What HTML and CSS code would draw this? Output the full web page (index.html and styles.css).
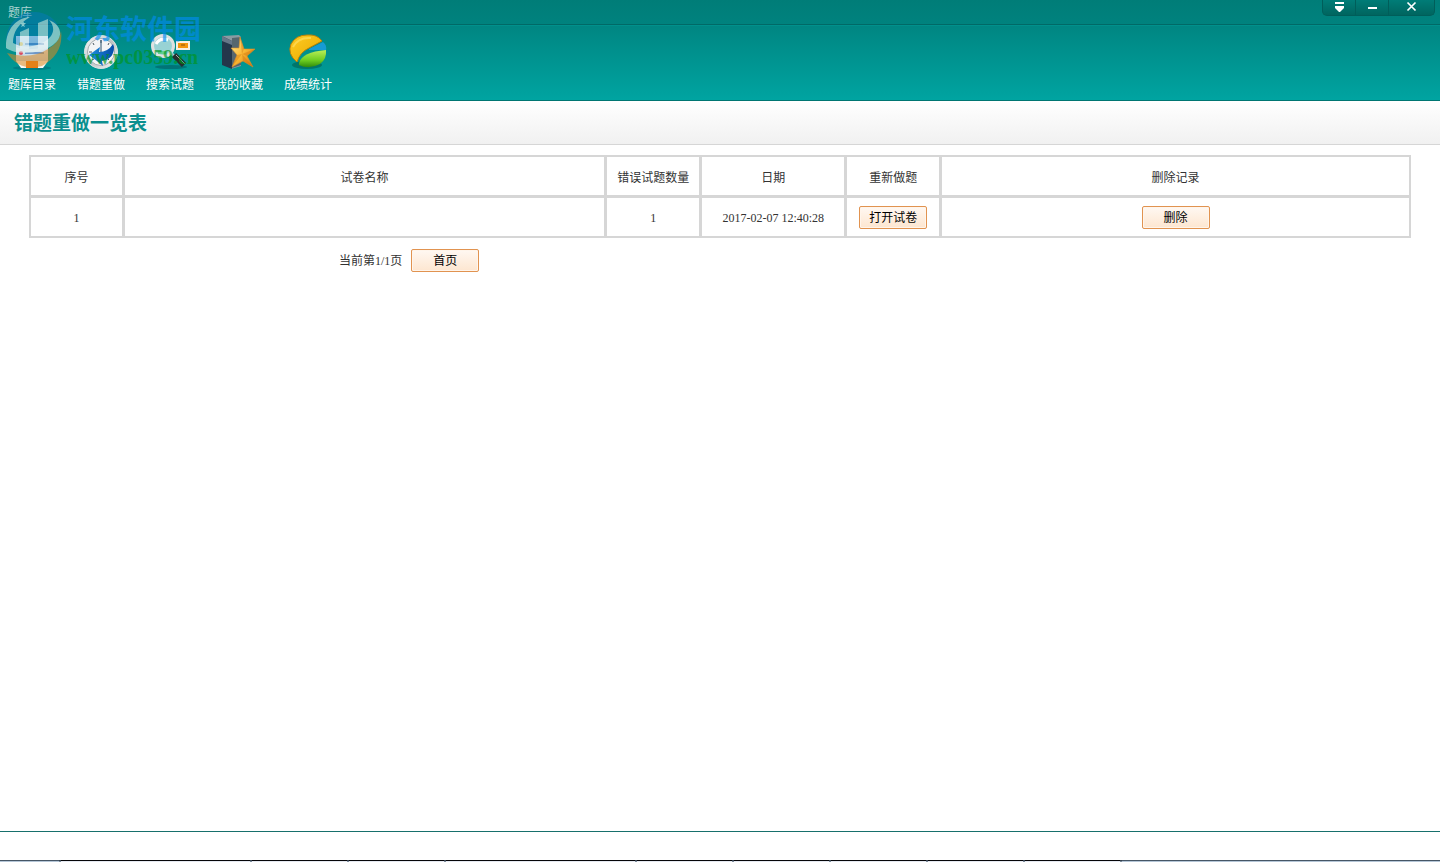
FILE: index.html
```html
<!DOCTYPE html>
<html lang="zh-CN">
<head>
<meta charset="utf-8">
<title>题库</title>
<link rel="stylesheet" href="styles.css">
</head>
<body>
<div class="app">
  <header class="titlebar">
    <span class="app-name">题库</span>
    <div class="window-controls">
      <button type="button" aria-label="菜单"><svg width="11" height="12" viewBox="0 0 11 12"><path d="M1 2h9v2H1zM1 6h9v2L6 12H5L1 8z" fill="#fff"/></svg></button>
      <button type="button" aria-label="最小化"><svg width="11" height="12" viewBox="0 0 11 12"><path d="M1 7h9v2H1z" fill="#fff"/></svg></button>
      <button type="button" class="close" aria-label="关闭"><svg width="11" height="12" viewBox="0 0 11 12"><path d="M1.500 2.500l8 8M9.500 2.500l-8 8" stroke="#fff" stroke-width="1.700"/></svg></button>
    </div>
  </header>

  <nav class="toolbar">
    <a class="tool" href="#">
      <svg width="40" height="40" viewBox="0 0 40 40"><defs><linearGradient id="pg" x2="0" y2="1"><stop stop-color="#f5faff"/><stop offset="1" stop-color="#bcd2e4"/></linearGradient></defs><ellipse cx="20" cy="36" rx="19" ry="2" fill="#035" opacity=".25"/><path d="M4 29h32l-5 7H9z" fill="#f8f8f5"/><path d="M14 28h12v8H14z" fill="#f07810"/><path d="M4 4h32v25H4z" fill="url(#pg)"/><path d="M13 11h19v2H13zM13 20h19v2H13z" fill="#6f98c9"/><circle cx="9" cy="12" r="2" fill="#f9c62e"/><circle cx="9" cy="21" r="2" fill="#d94c60"/></svg>
      <span>题库目录</span>
    </a>
    <a class="tool" href="#">
      <svg width="40" height="40" viewBox="0 0 40 40"><defs><linearGradient id="clock" x2="1" y2="1"><stop stop-color="#fff"/><stop offset=".5" stop-color="#bcc2c3"/><stop offset="1" stop-color="#fafafa"/></linearGradient><linearGradient id="arrow" x2="1"><stop stop-color="#1d8fdd"/><stop offset="1" stop-color="#064caa"/></linearGradient></defs><circle cx="20" cy="20" r="16.500" fill="url(#clock)" stroke="#d9e2e2"/><circle cx="20" cy="20" r="13.500" fill="#f3f5f6" stroke="#a5adb0"/><path d="M20 8v3M20 29v3M8 20h3M29 20h3M12 11l1 2M28 11l-1 2M11 28l2-1M28 28l-1-1" stroke="#4b5960"/><path d="M20 8v14" stroke="#28516c"/><path d="M8 23L19 15l-1 5q9 0 14-8l1 3q0 12-12 14l1 5Q15 28 8 23z" fill="url(#arrow)"/></svg>
      <span>错题重做</span>
    </a>
    <a class="tool" href="#">
      <svg width="40" height="40" viewBox="0 0 40 40"><ellipse cx="21" cy="35" rx="16" ry="2" fill="#034" opacity=".35"/><path d="M26 9h14v9H26z" fill="#f9eee1"/><path d="M28 11h10v5H28z" fill="#f4940e"/><path d="M31 13h4" stroke="#89540c"/><path d="M20 20l5 5" stroke="#bdc6c7" stroke-width="3"/><path d="M24 23l10 10" stroke="#25302f" stroke-width="6"/><path d="M26 23l9 9" stroke="#a5aeaa" stroke-width="1"/><circle cx="13" cy="14" r="10.500" fill="#d9f0f4" fill-opacity=".7" stroke="#dfe1e1" stroke-width="3"/><path d="M6 12q4-7 12-4" fill="none" stroke="#fff" stroke-width="3"/><path d="M8 19h8v3H8z" fill="#5ecf91"/></svg>
      <span>搜索试题</span>
    </a>
    <a class="tool" href="#">
      <svg width="40" height="40" viewBox="0 0 40 40"><defs><linearGradient id="star" x2="1" y2="1"><stop stop-color="#fff0a0"/><stop offset=".5" stop-color="#fbb935"/><stop offset="1" stop-color="#d06c0a"/></linearGradient></defs><path d="M3 4l17-1 2 2v29L12 37z" fill="#8b9ba2"/><path d="M13 6l9-1v28l-9 3z" fill="#56666e"/><path d="M3 4l10 5v28L3 33z" fill="#24364b"/><path d="M3 4l10 5v4L3 9z" fill="#667789"/><path d="M21 5l4 12 11 0-8 7 6 11-10-6-11 6 5-12-6-7 8 0z" fill="url(#star)" stroke="#d98f2a" stroke-width=".6"/><path d="M21 5l4 12-2 5zM36 17l-8 7-5-2zM34 35l-10-6-1-7zM13 35l5-12 5-1z" fill="#c96a08" opacity=".35"/></svg>
      <span>我的收藏</span>
    </a>
    <a class="tool" href="#">
      <svg width="40" height="40" viewBox="0 0 40 40"><defs><linearGradient id="gold" x2="1" y2="1"><stop stop-color="#ffcb25"/><stop offset=".6" stop-color="#f1b70d"/><stop offset="1" stop-color="#a96500"/></linearGradient><linearGradient id="green" x2="0" y2="1"><stop stop-color="#b9ef58"/><stop offset=".6" stop-color="#6ccc20"/><stop offset="1" stop-color="#2e8a0b"/></linearGradient></defs><ellipse cx="19" cy="33" rx="15" ry="4" fill="#054" opacity=".5"/><path d="M11 31Q14 20 38 18 39 27 32 32 21 38 11 33z" fill="url(#green)"/><path d="M21 17L35 10Q39 13 38 18L21 18z" fill="#179bd3"/><path d="M9 30Q-1 22 3 12 8 3 19 3 29 2 34 9L21 16Q12 20 9 30z" fill="url(#gold)" stroke="#bd8107"/><path d="M5 15Q10 5 23 6" fill="none" stroke="#ffe36c" stroke-width="2" opacity=".6"/></svg>
      <span>成绩统计</span>
    </a>
  </nav>

  <div class="watermark">
    <svg width="58" height="58" viewBox="0 0 58 58"><path d="M1 28C2 10 15 0 29 0 43 0 51 8 54 16 53 28 44 36 29 37 14 38 4 34 1 28z" fill="#0878bd" opacity=".75"/><path d="M2 41Q26 48 43 37 55 30 56 19 59 42 37 54 15 60 2 41z" fill="#dc8921" opacity=".85"/><path d="M1 31C3 14 13 6 25 5 13 12 8 20 8 31 20 38 38 34 46 24 50 18 48 12 44 8 57 13 59 25 48 33 34 43 11 43 1 36z" fill="#e3f3ee" opacity=".85"/><path d="M15 20l9-4v21h-9zM33 11l10-4v27l-10 3z" fill="#e6f5f4" opacity=".8"/><path d="M18 9l1 2h2l-2 2 1 2-2-1-2 1 1-2-2-2h2z" fill="#d4f2f8"/></svg>
    <div class="watermark-copy"><strong>河东软件园</strong><span>www.pc0359.cn</span></div>
  </div>

  <div class="page-heading"><h1>错题重做一览表</h1></div>
  <main class="content">
    <table class="records">
      <colgroup><col class="index"><col class="paper"><col class="narrow"><col class="date"><col class="narrow"><col></colgroup>
      <thead><tr><th>序号</th><th>试卷名称</th><th>错误试题数量</th><th>日期</th><th>重新做题</th><th>删除记录</th></tr></thead>
      <tbody><tr><td>1</td><td></td><td>1</td><td>2017-02-07 12:40:28</td><td><button class="action" type="button">打开试卷</button></td><td><button class="action" type="button">删除</button></td></tr></tbody>
    </table>
    <div class="pager"><span>当前第1/1页</span><button class="action" type="button">首页</button></div>
  </main>
  <footer class="statusbar"></footer>
  <div class="taskbar"><i class="start"></i><i class="wide"></i><i></i><i></i><i class="wide"></i><i></i><i></i><i></i><i></i><i></i><i></i></div>
</div>
</body>
</html>
```
FILE: styles.css
```css
* { box-sizing: border-box; }
body { margin: 0; background: #fff; color: #333; font: 12px/16px "Liberation Serif", "Noto Sans CJK SC", serif; }
button { font: inherit; cursor: pointer; }
.app { position: relative; min-height: 100vh; display: flex; flex-direction: column; overflow: hidden; }
.titlebar { height: 25px; padding-left: 8px; display: flex; justify-content: space-between; align-items: flex-start; background: linear-gradient(#007d78, #00827e); border-bottom: 1px solid #006966; }
.app-name { padding-top: 5px; color: #a9d3d1; }
.window-controls { display: flex; height: 16px; margin-right: 5px; border: 1px solid #005e5a; border-top: 0; border-radius: 0 0 5px 5px; background: linear-gradient(#007c77, #00655f); }
.window-controls button { width: 33px; padding: 0; border: 0; border-right: 1px solid #005e5a; background: none; display: flex; justify-content: center; align-items: flex-start; }
.window-controls .close { width: 45px; border-right: 0; }
.toolbar { height: 76px; padding: 6px 8px 0; display: flex; gap: 21px; background: linear-gradient(#008682, #00a4a1); border-top: 1px solid #00908c; border-bottom: 1px solid #007672; }
.tool { width: 48px; display: flex; flex-direction: column; align-items: center; gap: 5px; color: #fff; text-decoration: none; white-space: nowrap; }
.tool svg { display: block; }
.watermark { position: absolute; left: 5px; top: 12px; display: flex; gap: 3px; pointer-events: none; }
.watermark svg { opacity: .65; }
.watermark-copy { display: flex; flex-direction: column; gap: 3px; white-space: nowrap; }
.watermark-copy strong { color: #008cf0; opacity: .65; font: bold 27px/32px "Noto Sans CJK SC", sans-serif; }
.watermark-copy span { color: #00941c; opacity: .65; font: bold 20px/20px "Liberation Serif", serif; }
.page-heading { height: 44px; padding: 11px 14px; background: linear-gradient(#fff, #f1f1f1); border-bottom: 1px solid #d6d6d6; }
h1 { margin: 0; color: #0b8f8f; font: bold 19px/24px "Liberation Serif", "Noto Sans CJK SC", serif; }
.content { flex: 1; padding: 10px 29px; }
.records { width: 100%; table-layout: fixed; border-collapse: separate; border-spacing: 1px; background: #d6d6d6; }
.records th, .records td { height: 40px; padding: 0; border: 1px solid #d6d6d6; background: #fff; text-align: center; font-weight: normal; }
.records th { padding-top: 3px; }
.records td { padding-top: 1px; }
.index { width: 93px; }
.narrow { width: 94px; }
.paper { width: 35%; }
.date { width: 144px; }
.action { width: 68px; height: 23px; padding: 0; color: #000; border: 1px solid #e19350; border-radius: 2px; background: linear-gradient(#fff8f2, #fde6d0); box-shadow: inset 0 0 0 1px #fff5eb; line-height: 20px; vertical-align: middle; }
.pager { padding: 11px 0 0 310px; display: flex; align-items: center; gap: 9px; }
.statusbar { height: 29px; border-top: 1px solid #17706c; }
.taskbar { height: 2px; display: flex; gap: 2px; background: #7b8998; border-top: 1px solid #354250; }
.taskbar i { width: 95px; background: #e5e9f1; margin-top: -1px; border-top: 1px solid #050508; }
.taskbar .start { width: 59px; background: #b5c6d7; border-color: #465666; }
.taskbar .wide { width: 189px; }
.taskbar i:last-child { flex: 1; background: #b5c6d7; border-color: #465666; }
```
